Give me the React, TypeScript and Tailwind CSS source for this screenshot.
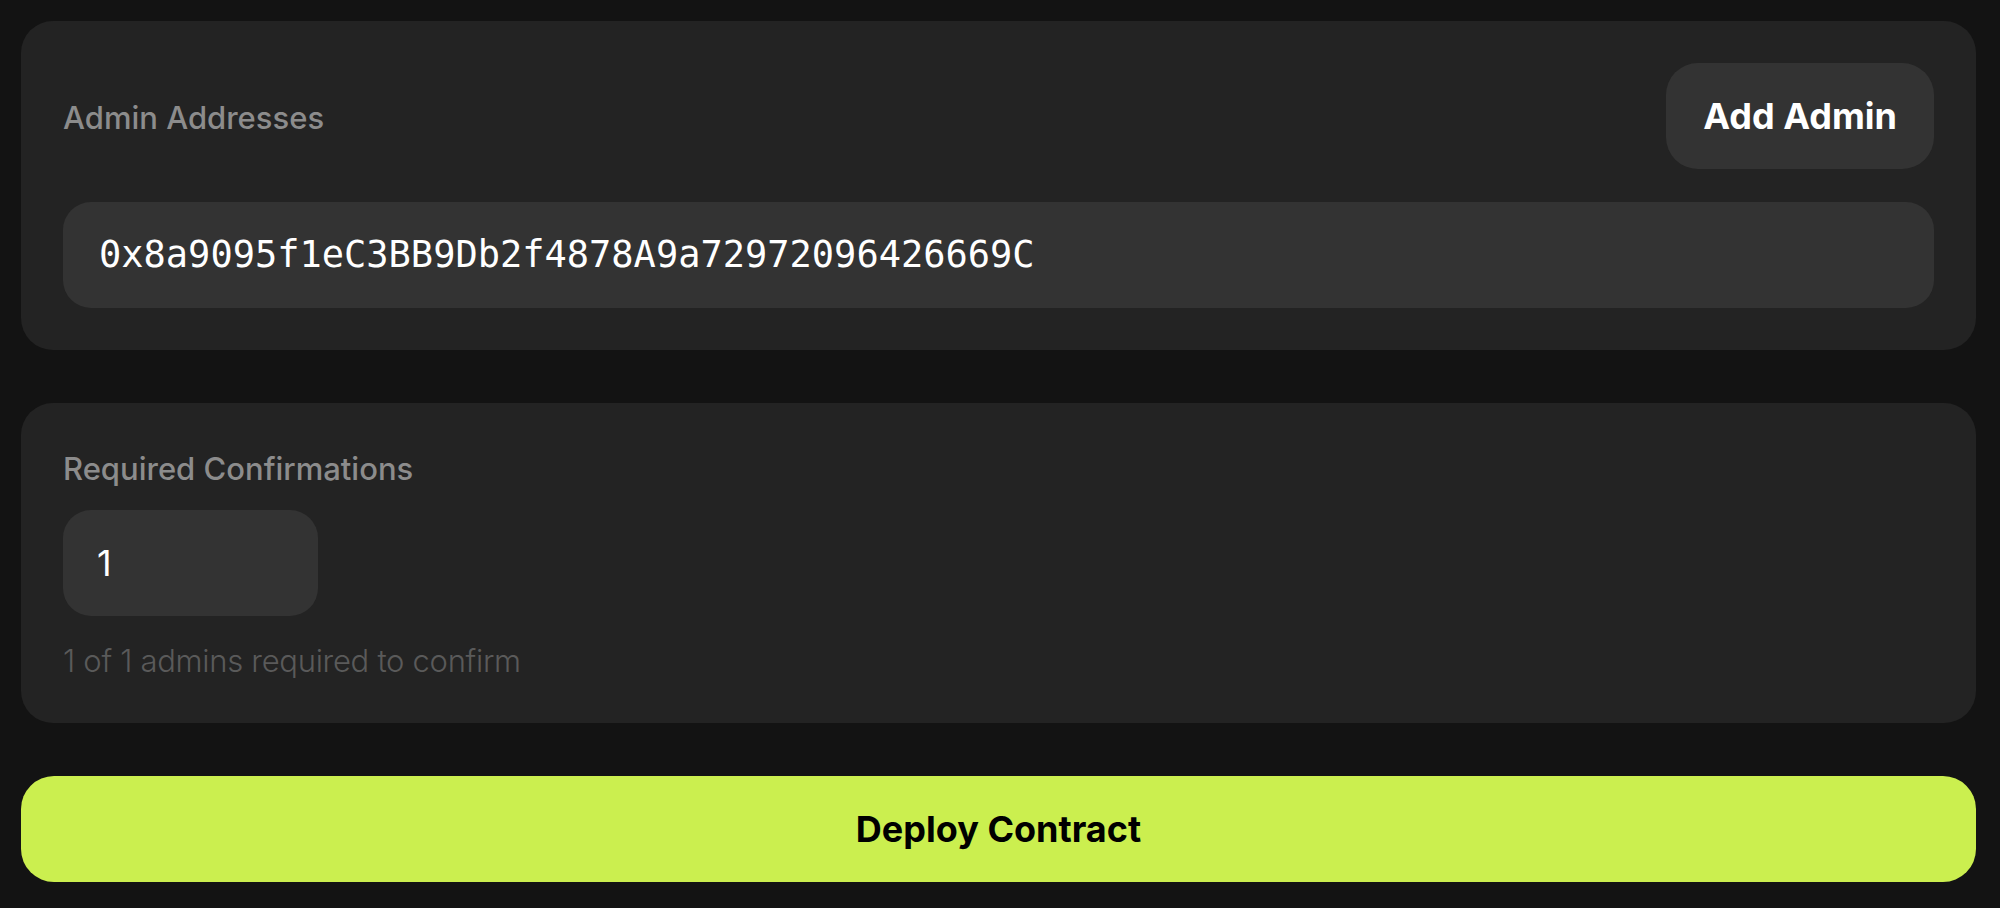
import React from "react";

export default function App() {
  return (
    <div
      className="min-h-[908px] w-full bg-[#131313] pt-[21px] pl-[21px] pr-[24px] flex flex-col gap-[53px]"
      style={{ fontFamily: "Inter, 'Noto Sans', sans-serif" }}
    >
      <div className="bg-[#232323] rounded-[32px] p-[42px] flex flex-col gap-[33px]">
        <div className="flex items-center justify-between">
          <span className="text-[31px] leading-[36px] font-medium text-[#8c8c8c] mt-[4px]">
            Admin Addresses
          </span>
          <button className="h-[106px] px-[37px] rounded-[32px] bg-[#333333] text-white text-[36px] font-bold">
            Add Admin
          </button>
        </div>
        <div className="h-[106px] rounded-[28px] bg-[#333333] flex items-center pl-[36px]">
          <span
            className="text-white text-[37px]"
            style={{ fontFamily: "'DejaVu Sans Mono', 'Liberation Mono', monospace" }}
          >
            0x8a9095f1eC3BB9Db2f4878A9a72972096426669C
          </span>
        </div>
      </div>

      <div className="bg-[#232323] rounded-[32px] px-[42px] pt-[48px] pb-[44px] flex flex-col">
        <span className="text-[31px] leading-[36px] font-medium text-[#8c8c8c]">
          Required Confirmations
        </span>
        <div className="mt-[23px] w-[255px] h-[106px] rounded-[28px] bg-[#333333] flex items-center pl-[34px]">
          <span className="text-white text-[36px]">1</span>
        </div>
        <span className="mt-[27px] text-[31px] leading-[36px] font-light text-[#5a5a5a] tracking-[-0.3px]">
          1 of 1 admins required to confirm
        </span>
      </div>

      <button className="h-[106px] w-full rounded-[33px] bg-[#cbef4f] text-black text-[36px] font-bold">
        Deploy Contract
      </button>
    </div>
  );
}
